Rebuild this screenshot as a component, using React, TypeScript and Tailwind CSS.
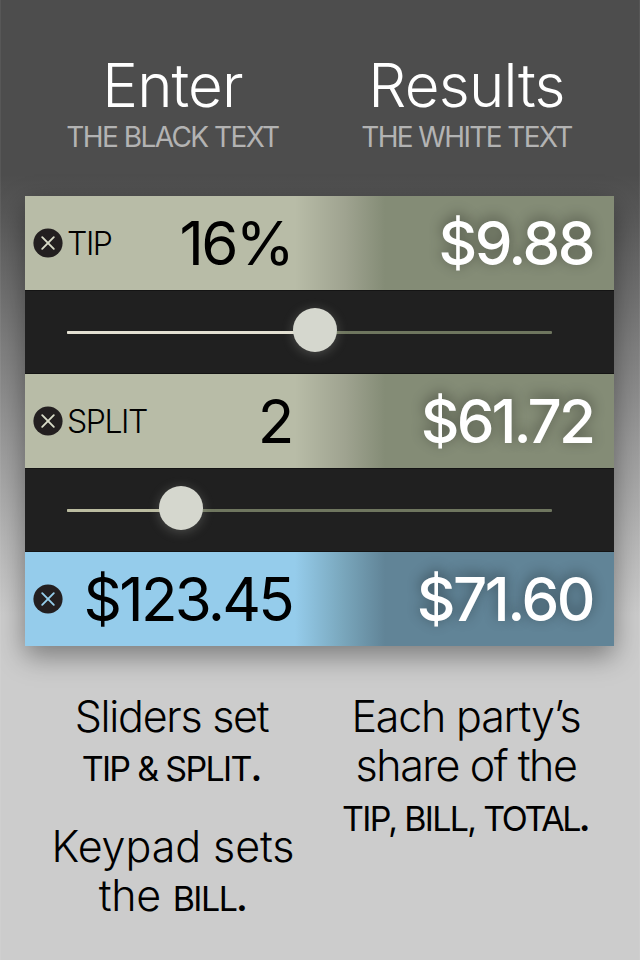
import type { ReactNode } from 'react';

const ClearButton = ({ color }: { color: string }) => (
  <svg className="block size-[30px] shrink-0" viewBox="0 0 30 30" fill="none">
    <circle cx="15" cy="15" r="14.6" fill="#231f20" />
    <path d="M9.2 9.2l11.6 11.6M20.8 9.2L9.2 20.8" stroke={color} strokeWidth="1.9" strokeLinecap="round" />
  </svg>
);

type RowProps = {
  label?: string;
  color: string;
  background: string;
  input: ReactNode;
  result: ReactNode;
};

const Row = ({ label, color, background, input, result }: RowProps) => (
  <div className={`flex h-[94px] items-center pl-2 ${background}`}>
    <ClearButton color={color} />
    <span className="ml-1 pt-[2px] text-[32px] font-light text-black tracking-[-0.045em]">{label}</span>
    <span className="ml-auto">{input}</span>
    <span className="flex w-[322px] justify-end pr-[21px] text-white [text-shadow:0_-3px_14px_rgba(0,0,0,0.42)]">{result}</span>
  </div>
);

type SliderProps = {
  position: number;
  fill: string;
};

const Slider = ({ position, fill }: SliderProps) => (
  <div className="flex h-[84px] items-center border-y border-[#141414] bg-[#202020] pl-[42px]">
    <div className="relative h-[3px] w-[485px] rounded-[1px] bg-[#6f765f]">
      <div className={`h-full rounded-l-[1px] ${fill}`} style={{ width: position }} />
      <div
        className="absolute top-[-22.5px] size-[44px] rounded-full bg-[#d5d7ce] shadow-[0_2px_12px_rgba(213,215,206,0.25)]"
        style={{ left: position - 22 }}
      />
    </div>
  </div>
);

const App = () => {
  return (
    <div className="h-[960px] w-[640px] overflow-hidden bg-[linear-gradient(#4d4d4d_175px,#cccccc_615px)] font-['Inter',sans-serif] whitespace-nowrap shadow-[inset_1px_0_0_rgba(255,255,255,0.06),inset_-1px_0_0_rgba(255,255,255,0.06)]">
      <header className="flex h-[196px] pt-[45px] pl-[12px] text-center">
        <div className="w-[321px]">
          <h1 className="h-20 text-[60px] leading-[80px] font-light text-white tracking-[-0.015em]">Enter</h1>
          <p className="text-[28px] leading-[24px] text-[#b3b3b3] tracking-[-0.056em]">THE BLACK TEXT</p>
        </div>
        <div className="w-[267px]">
          <h1 className="h-20 text-[60px] leading-[80px] font-light text-white tracking-[-0.012em]">Results</h1>
          <p className="text-[28px] leading-[24px] text-[#b3b3b3] tracking-[-0.058em]">THE WHITE TEXT</p>
        </div>
      </header>

      <main className="mx-[25px] w-[589px] shadow-[0_10px_26px_rgba(0,0,0,0.4)]">
        <Row
          label="TIP"
          color="#d9dbc8"
          background="bg-[linear-gradient(90deg,#b8bca7_270px,#9fa390_320px,#848c76_360px)]"
          input={<span className="text-[60px] tracking-[-0.045em]">16%</span>}
          result={<span className="text-[60px] font-medium tracking-[-0.042em]">$9.88</span>}
        />
        <Slider position={248} fill="bg-[#e3e0d2]" />
        <Row
          label="SPLIT"
          color="#d9dbc8"
          background="bg-[linear-gradient(90deg,#b8bca7_270px,#9fa390_320px,#848c76_360px)]"
          input={<span className="text-[60px] tracking-[-0.04em]">2</span>}
          result={<span className="text-[60px] font-medium tracking-[-0.049em]">$61.72</span>}
        />
        <Slider position={113.5} fill="bg-[#bbbca0]" />
        <Row
          color="#95cdea"
          background="bg-[linear-gradient(90deg,#95cceb_270px,#7ba9bf_315px,#618497_360px)]"
          input={<span className="text-[60px] tracking-[-0.046em]">$123.45</span>}
          result={<span className="text-[60px] font-medium tracking-[-0.041em]">$71.60</span>}
        />
      </main>

      <footer className="flex pt-[46px] text-center text-[43px] leading-[49px] font-light text-black">
        <div className="w-[346px]">
          <p className="pr-[3px] tracking-[-0.03em]">Sliders set</p>
          <p className="h-[81px] pt-[3px] pr-[4px] text-[34px] font-normal tracking-[-0.05em]">TIP &amp; SPLIT<b className="font-bold">.</b></p>
          <p className="tracking-[-0.002em]">Keypad sets</p>
          <p className="pr-[1px] tracking-[-0.008em]">the <span className="text-[34px] font-normal tracking-[-0.045em]">BILL<b>.</b></span></p>
        </div>
        <div className="w-[240px]">
          <p className="tracking-[-0.028em]">Each party’s</p>
          <p className="tracking-[-0.034em]">share of the</p>
          <p className="-ml-1 pt-[4px] text-[34px] font-normal tracking-[-0.05em]">TIP, BILL, <span className="tracking-[-0.07em]">TOTAL</span><b>.</b></p>
        </div>
      </footer>
    </div>
  );
};

export default App;
